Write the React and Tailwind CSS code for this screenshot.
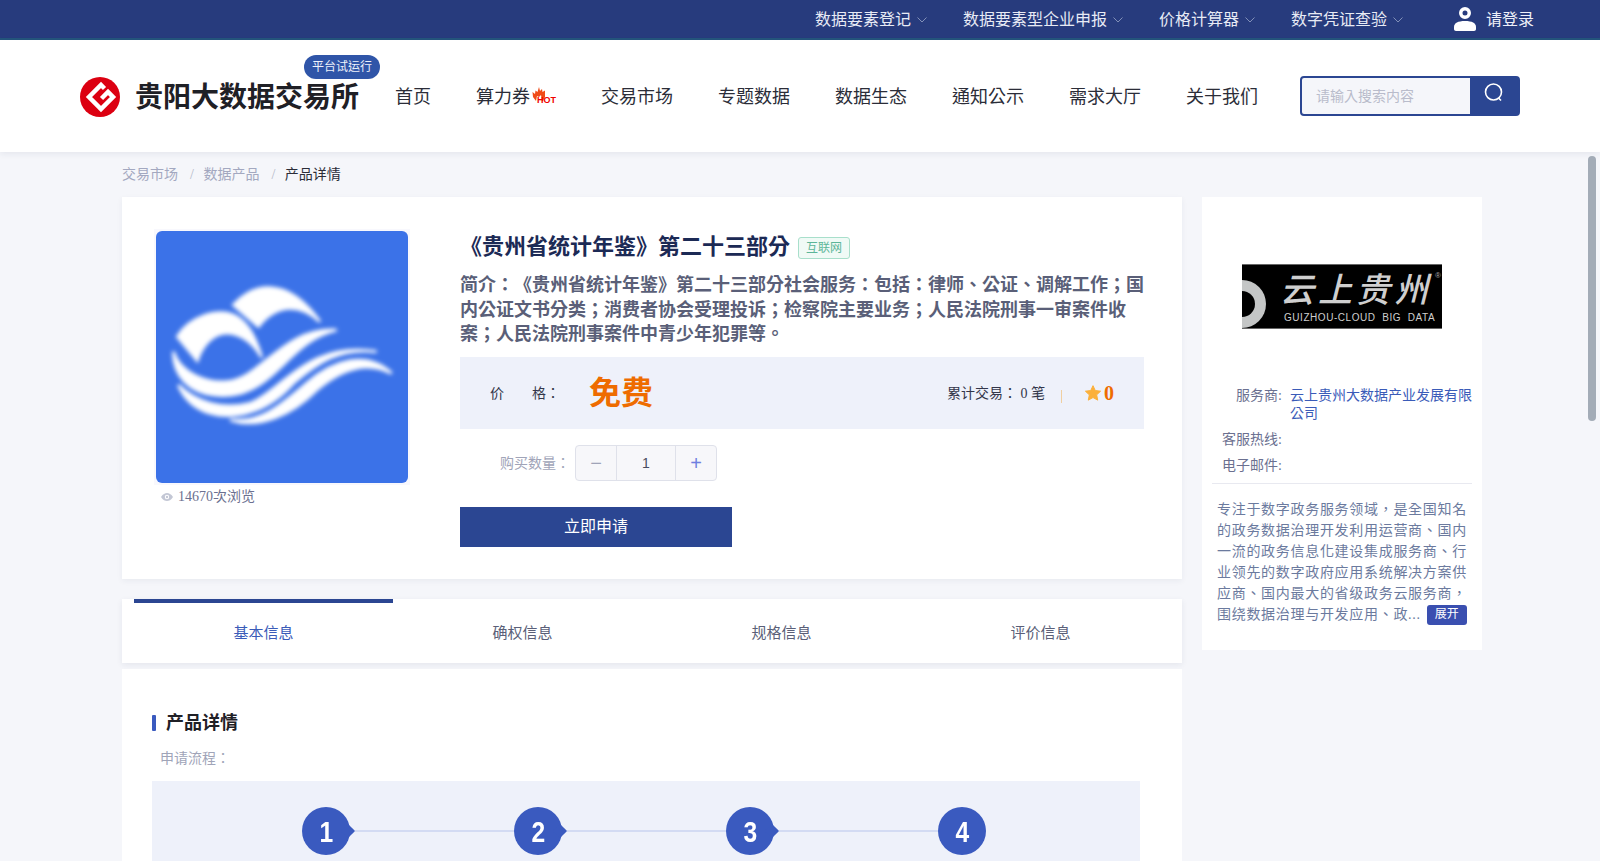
import React from "react";

const Chevron = () => (
  <svg width="10" height="6" viewBox="0 0 10 6" className="ml-[6px] mt-[1px]" fill="none" stroke="#8290b8" strokeWidth="1">
    <path d="M0.5 0.5 L5 5 L9.5 0.5" />
  </svg>
);

const TopItem = ({ label }) => (
  <div className="flex items-center">
    <span className="text-[16px] leading-[24px] text-[#e8ebf5]">{label}</span>
    <Chevron />
  </div>
);

const Logo = () => (
  <svg width="40" height="40" viewBox="0 0 40 40" className="shrink-0">
    <circle cx="20" cy="20" r="20" fill="#dc0011" />
    <path d="M24.5 11.5 L21 8 L9 20 L21 32 L33 20 L28 15 L21.5 21.5" fill="none" stroke="#fff" strokeWidth="4.5" strokeLinejoin="miter" />
  </svg>
);

const NavItem = ({ children }) => <div className="text-[18px] leading-[28px] text-[#2b2d38]">{children}</div>;

const Hot = () => (
  <div className="relative h-[20px] w-[26px] mt-[4px]">
    <svg width="14" height="15" viewBox="0 0 14 15" className="absolute left-[2px] top-[-2px]">
      <path d="M7 0 L8 4 L10 2 L10.5 5 L13 3.5 L13 10 L11 14 L4 14 L1 10 L0.5 5 L3 7 L3.5 3.5 L5.5 5 Z" fill="#f04a17" />
      <path d="M4 14 L5 9 L7 10 L9 8 L10 14Z" fill="#fff" />
    </svg>
    <span className="absolute left-[7px] top-[7px] font-['Liberation_Sans'] text-[9px] leading-[9px] font-bold text-[#f00000]">HOT</span>
  </div>
);

const Waves = () => (
  <svg viewBox="0 0 756 756" className="block h-[252px] w-[252px] rounded-[6px] bg-[#3b72e8]">
    <defs>
      <filter id="soft" x="-10%" y="-10%" width="120%" height="120%">
        <feGaussianBlur stdDeviation="6" />
      </filter>
    </defs>
    <g transform="translate(-108 -93)" fill="#fff" stroke="#fff" strokeWidth="8" filter="url(#soft)">
      <path d="M172 410 C210 350 290 325 340 345 C385 365 410 420 425 472 C395 420 350 395 310 400 C275 405 245 440 232 482Z" />
      <path d="M340 315 C400 250 500 225 600 365 C540 310 470 310 415 380Z" />
      <path d="M160 455 C180 520 260 550 320 545 C420 540 490 380 650 390 C560 410 510 480 450 530 C380 590 320 590 280 585 C210 575 160 530 160 455Z" />
      <path d="M175 555 C230 610 310 630 390 610 C480 580 560 420 770 455 C660 440 590 490 520 550 C440 640 340 660 270 640 C220 625 190 590 175 555Z" />
      <path d="M330 660 C420 670 480 620 560 550 C640 480 740 450 815 520 C740 480 660 510 590 570 C520 640 420 690 330 660Z" />
    </g>
  </svg>
);

const Eye = () => (
  <svg width="12" height="8" viewBox="0 0 12 8">
    <path d="M0 4 C2 1 4 0 6 0 C8 0 10 1 12 4 C10 7 8 8 6 8 C4 8 2 7 0 4Z M6 1.8 A2.2 2.2 0 1 0 6 6.2 A2.2 2.2 0 1 0 6 1.8Z" fill="#c3c7d5" fillRule="evenodd" />
    <circle cx="6" cy="4" r="1.2" fill="#c3c7d5" />
  </svg>
);

const Star = () => (
  <svg width="16" height="16" viewBox="0 0 24 24">
    <path d="M12 1 L15.4 8.3 L23.4 9.3 L17.5 14.8 L19.1 22.7 L12 18.8 L4.9 22.7 L6.5 14.8 L0.6 9.3 L8.6 8.3Z" fill="#fbb03b" stroke="#fbb03b" strokeWidth="1.5" strokeLinejoin="round" />
  </svg>
);

const CloudLogo = () => (
  <div className="relative h-[65px] w-[200px] overflow-hidden border-y border-[#666] bg-black">
    <svg width="26" height="64" viewBox="0 0 26 64" className="absolute left-0 top-0">
      <circle cx="0" cy="39" r="24" fill="#c4c6c6" />
      <circle cx="0" cy="39" r="13" fill="#000" />
    </svg>
    <div className="ml-[38px] mt-[7px] whitespace-nowrap text-[34px] leading-[38px] font-medium tracking-[4px] text-[#cfcfcf] italic">云上贵州</div>
    <div className="ml-[42px] mt-[2px] whitespace-nowrap font-['Liberation_Sans'] text-[10px] leading-[12px] tracking-[0.55px] text-[#cfcfcf]">GUIZHOU-CLOUD&nbsp;&nbsp;BIG&nbsp;&nbsp;DATA</div>
    <span className="absolute right-[1px] top-[6px] font-['Liberation_Sans'] text-[8px] leading-[9px] text-[#aaa]">®</span>
  </div>
);

const paragraph = [
  "专注于数字政务服务领域，是全国知名",
  "的政务数据治理开发利用运营商、国内",
  "一流的政务信息化建设集成服务商、行",
  "业领先的数字政府应用系统解决方案供",
  "应商、国内最大的省级政务云服务商，",
];

const Step = ({ n, last }) => (
  <div className="flex items-center">
    <div className="relative flex h-[48px] w-[48px] items-center justify-center rounded-full bg-[#3a5abf] font-['Liberation_Sans'] text-[30px] font-bold text-white">
      <span className="inline-block scale-x-[0.82]">{n}</span>
      {!last && <span className="absolute right-[-3px] top-[19px] h-[10px] w-[10px] rotate-45 rounded-[1px] bg-[#3a5abf]" />}
    </div>
    {!last && <div className="h-[2px] w-[164px] bg-[#d3dbf3]" />}
  </div>
);

export default function App() {
  return (
    <div className="relative h-[861px] overflow-hidden bg-[#f5f6fa] font-['Liberation_Serif','Noto_Sans_CJK_TC',serif] [text-spacing-trim:space-all]">
      <div className="flex h-[40px] items-center justify-end border-b-2 border-[#24557c] bg-[#273b7d] pr-[66px]">
        <div className="flex items-center gap-[36px] pt-[1px]">
          <TopItem label="数据要素登记" />
          <TopItem label="数据要素型企业申报" />
          <TopItem label="价格计算器" />
          <TopItem label="数字凭证查验" />
        </div>
        <svg width="22" height="24" viewBox="0 0 22 24" className="ml-[51px]">
          <path fillRule="evenodd" d="M11 0 A6 6 0 1 1 11 12 A6 6 0 1 1 11 0Z M11 3.5 A2.5 2.5 0 1 0 11 8.5 A2.5 2.5 0 1 0 11 3.5Z" fill="#fff" />
          <path d="M2 24 C0.8 24 0 23.2 0 22 L0 20 C0 16 4 14 11 14 C18 14 22 16 22 20 L22 22 C22 23.2 21.2 24 20 24Z" fill="#fff" />
        </svg>
        <span className="ml-[10px] pt-[1px] text-[16px] leading-[24px] text-[#eef0f8]">请登录</span>
      </div>

      <header className="relative flex h-[112px] items-center bg-white pl-[80px] shadow-[0_2px_6px_rgba(40,50,90,0.08)]">
        <div className="pt-[2px]">
          <Logo />
        </div>
        <div className="relative ml-[15px] pt-[3px]">
          <span className="text-[28px] leading-[36px] font-semibold text-[#1f2026]">贵阳大数据交易所</span>
          <span className="absolute left-[169px] top-[-22px] flex h-[24px] w-[76px] items-center justify-center whitespace-nowrap rounded-full bg-[#2f55a8] text-[12px] text-[#eef2fb]">平台试运行</span>
        </div>
        <nav className="ml-[36px] flex items-center gap-[45px] pt-[1px]">
          <NavItem>首页</NavItem>
          <div className="flex items-center">
            <NavItem>算力券</NavItem>
            <Hot />
          </div>
          <NavItem>交易市场</NavItem>
          <NavItem>专题数据</NavItem>
          <NavItem>数据生态</NavItem>
          <NavItem>通知公示</NavItem>
          <NavItem>需求大厅</NavItem>
          <NavItem>关于我们</NavItem>
        </nav>
        <div className="ml-[42px] flex h-[40px] w-[220px] overflow-hidden rounded-[4px] border-2 border-[#2b4692] bg-[#2b4692]">
          <div className="flex w-[168px] items-center bg-[#f5f6fa] pl-[14px] text-[14px] text-[#b9bccb]">请输入搜索内容</div>
          <div className="flex flex-1 items-center justify-center pb-[6px]">
            <svg width="20" height="20" viewBox="0 0 20 20" fill="none" stroke="#fff" strokeWidth="1.6">
              <circle cx="9.5" cy="9" r="8" />
              <path d="M14.5 15 L17 17.5" />
            </svg>
          </div>
        </div>
      </header>

      <div className="ml-[122px] w-[1360px]">
        <div className="flex h-[45px] items-center text-[14px] text-[#a3a8c0]">
          <span>交易市场</span>
          <span className="ml-[12px] mr-[9.5px] text-[#b4b8c8]">/</span>
          <span>数据产品</span>
          <span className="ml-[12px] mr-[9.5px] text-[#b4b8c8]">/</span>
          <span className="text-[#2b2d38]">产品详情</span>
        </div>

        <div className="flex items-start gap-[20px]">
          <div className="w-[1060px]">
            <section className="flex h-[382px] bg-white pl-[32px] pt-[32px] shadow-[0_2px_6px_rgba(40,50,90,0.06)]">
              <div className="w-[256px] shrink-0">
                <div className="bg-[#f8f8fd] p-[2px]">
                  <Waves />
                </div>
                <div className="ml-[7px] mt-[2px] flex items-center gap-[5px] text-[14px] leading-[20px] text-[#6b7090]">
                  <Eye />
                  <span>14670次浏览</span>
                </div>
              </div>
              <div className="ml-[50px] w-[684px] pt-[3px]">
                <div className="flex h-[30px] items-center">
                  <h1 className="text-[22px] leading-[30px] font-bold text-[#1c2a55]">《贵州省统计年鉴》第二十三部分</h1>
                  <span className="ml-[8px] mt-[1px] flex h-[22px] w-[52px] items-center justify-center rounded-[3px] border border-[#a8dfcb] bg-[#f0faf6] text-[12px] text-[#5cb598]">互联网</span>
                </div>
                <p className="mt-[11px] text-[18px] leading-[24.5px] font-bold text-[#5a5f78]">
                  简介：《贵州省统计年鉴》第二十三部分社会服务：包括：律师、公证、调解工作；国内公证文书分类；消费者协会受理投诉；检察院主要业务；人民法院刑事一审案件收案；人民法院刑事案件中青少年犯罪等。
                </p>
                <div className="mt-[10.5px] flex h-[72px] items-center bg-[#eef1fa] pl-[30px] pr-[30px]">
                  <span className="flex w-[70px] justify-between text-[14px] text-[#33364a]">
                    <span>价</span>
                    <span>格：</span>
                  </span>
                  <span className="ml-[29px] text-[32px] font-bold text-[#ee6c00]">免费</span>
                  <span className="ml-auto text-[14px] text-[#33364a]">累计交易：&nbsp;0 笔</span>
                  <span className="ml-[16px] mt-[6px] h-[13px] w-px bg-[#f0cfa0]" />
                  <span className="ml-[23px] flex items-center gap-[3px]">
                    <Star />
                    <span className="text-[20px] leading-[24px] font-bold text-[#ee6c00]">0</span>
                  </span>
                </div>
                <div className="mt-[16px] flex items-center pl-[40px]">
                  <span className="w-[75px] text-[14px] text-[#a0a4b8]">购买数量：</span>
                  <div className="flex h-[36px] w-[142px] overflow-hidden rounded-[4px] border border-[#dfe1ea] bg-[#f7f7fa] text-[14px]">
                    <div className="flex w-[41px] items-center justify-center border-r border-[#dfe1ea] font-['Liberation_Sans'] text-[20px] text-[#a0a4b8]">−</div>
                    <div className="flex flex-1 items-center justify-center font-['Liberation_Sans'] text-[#4a4d60]">1</div>
                    <div className="flex w-[41px] items-center justify-center border-l border-[#dfe1ea] font-['Liberation_Sans'] text-[20px] text-[#6f7fe0]">+</div>
                  </div>
                </div>
                <button className="mt-[26px] h-[40px] w-[272px] bg-[#2b4692] text-[16px] text-white">立即申请</button>
              </div>
            </section>

            <div className="mt-[20px] flex h-[64px] bg-white px-[12px] shadow-[0_2px_6px_rgba(40,50,90,0.08)]">
              <div className="flex w-[259px] items-center justify-center border-t-4 border-[#2b4692] text-[15px] text-[#3a5bb8]">基本信息</div>
              <div className="flex w-[259px] items-center justify-center pt-[4px] text-[15px] text-[#5a5f78]">确权信息</div>
              <div className="flex w-[259px] items-center justify-center pt-[4px] text-[15px] text-[#5a5f78]">规格信息</div>
              <div className="flex w-[259px] items-center justify-center pt-[4px] text-[15px] text-[#5a5f78]">评价信息</div>
            </div>

            <section className="mt-[6px] h-[300px] bg-white pl-[30px] pt-[41px]">
              <div className="flex h-[26px] items-center">
                <span className="h-[16px] w-[4px] rounded-[1px] bg-[#3a5abf]" />
                <span className="ml-[10px] text-[18px] font-bold text-[#1f2026]">产品详情</span>
              </div>
              <div className="ml-[8px] mt-[13px] text-[14px] leading-[20px] text-[#a0a4b8]">申请流程：</div>
              <div className="mt-[12px] flex h-[200px] w-[988px] items-start bg-[#eef1fa] pl-[150px] pt-[26px]">
                <Step n="1" />
                <Step n="2" />
                <Step n="3" />
                <Step n="4" last />
              </div>
            </section>
          </div>

          <aside className="h-[453px] w-[280px] bg-white pt-[67px]">
            <div className="ml-[40px]">
              <CloudLogo />
            </div>
            <div className="mt-[58px] text-[14px] leading-[18px] text-[#6b7090]">
              <div className="flex">
                <span className="w-[80px] shrink-0 text-right">服务商:</span>
                <span className="ml-[8px] w-[185px] text-[#3a5bb8]">云上贵州大数据产业发展有限公司</span>
              </div>
              <div className="mt-[8px] flex">
                <span className="w-[80px] shrink-0 text-right">客服热线:</span>
              </div>
              <div className="mt-[8px] flex">
                <span className="w-[80px] shrink-0 text-right">电子邮件:</span>
              </div>
            </div>
            <div className="ml-[10px] mt-[8px] h-px w-[260px] bg-[#e8e9f0]" />
            <div className="ml-[15px] mt-[15px] w-[252px] text-[14px] leading-[21px] tracking-[0.7px] whitespace-nowrap text-[#6b7a9e]">
              {paragraph.map((line) => (
                <div key={line}>{line}</div>
              ))}
              <div className="flex items-center">
                <span>围绕数据治理与开发应用、政...</span>
                <span className="ml-[6px] flex h-[20px] w-[40px] items-center justify-center rounded-[3px] bg-[#3a4fb0] text-[12px] tracking-normal text-white">展开</span>
              </div>
            </div>
          </aside>
        </div>
      </div>

      <div className="absolute right-[4px] top-[156px] h-[265px] w-[8px] rounded-[4px] bg-[#a3acb7]" />
    </div>
  );
}
